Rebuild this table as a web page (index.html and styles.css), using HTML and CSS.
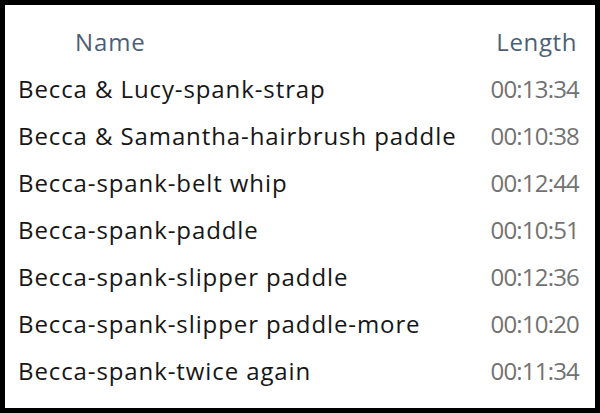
FILE: index.html
```html
<html>
<head>
  <meta charset="UTF-8">
  <title>Files</title>
  <link rel="stylesheet" href="styles.css">
</head>
<body>
  <div class="frame">
    <div class="list">
      <div class="row head">
        <div class="name">Name</div>
        <div class="len">Length</div>
      </div>
      <div class="row">
        <div class="name">Becca &amp; Lucy-spank-strap</div>
        <div class="len">00:13:34</div>
      </div>
      <div class="row">
        <div class="name">Becca &amp; Samantha-hairbrush paddle</div>
        <div class="len">00:10:38</div>
      </div>
      <div class="row">
        <div class="name">Becca-spank-belt whip</div>
        <div class="len">00:12:44</div>
      </div>
      <div class="row">
        <div class="name">Becca-spank-paddle</div>
        <div class="len">00:10:51</div>
      </div>
      <div class="row">
        <div class="name">Becca-spank-slipper paddle</div>
        <div class="len">00:12:36</div>
      </div>
      <div class="row">
        <div class="name">Becca-spank-slipper paddle-more</div>
        <div class="len">00:10:20</div>
      </div>
      <div class="row">
        <div class="name">Becca-spank-twice again</div>
        <div class="len">00:11:34</div>
      </div>
    </div>
  </div>
</body>
</html>
```

FILE: styles.css
```css
body {
  margin: 0;
  padding: 0;
  background: #000;
}
.frame {
  width: 600px;
  height: 413px;
  box-sizing: border-box;
  padding: 5px;
}
.list {
  height: 100%;
  background: #fff;
  padding: 13px 16px 0 13px;
  box-sizing: border-box;
  font-family: "Open Sans", "Noto Sans", sans-serif;
  font-size: 24px;
}
.row {
  display: flex;
  justify-content: space-between;
  height: 47px;
  align-items: center;
  color: #161616;
}
.row .name {
  letter-spacing: 0.9px;
}
.row .len {
  color: #727272;
  letter-spacing: -0.8px;
}
.head {
  color: #4d5f78;
}
.head .name {
  padding-left: 57px;
}
.head .len {
  color: #4d5f78;
  letter-spacing: 0.6px;
  padding-right: 2px;
}
```
